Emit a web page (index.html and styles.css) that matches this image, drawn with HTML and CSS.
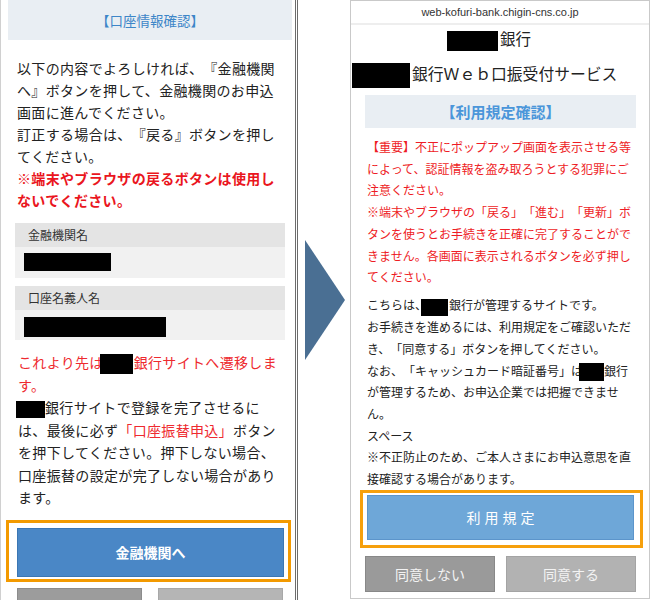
FILE: index.html
```html
<!DOCTYPE html>
<html lang="ja">
<head>
<meta charset="utf-8">
<title>口座振替</title>
<link rel="stylesheet" href="styles.css">
</head>
<body>
<div class="page">
  <section class="phone-left">
    <div class="title-l">【口座情報確認】</div>
    <p class="lead">以下の内容でよろしければ、『金融機関<br>へ』ボタンを押して、金融機関のお申込<br>画面に進んでください。<br>訂正する場合は、『戻る』ボタンを押し<br>てください。<br><strong class="warn">※端末やブラウザの戻るボタンは使用し<br>ないでください。</strong></p>
    <div class="info info-first">
      <div class="info-head">金融機関名</div>
      <div class="info-body"><span class="mask mask-bank"></span></div>
    </div>
    <div class="info info-second">
      <div class="info-head">口座名義人名</div>
      <div class="info-body info-body-tall"><span class="mask mask-holder"></span></div>
    </div>
    <p class="red-l">これより先は<span class="mask mask-inline-a"></span>銀行サイトへ遷移しま<br>す。</p>
    <p class="body-l"><span class="mask mask-inline-b"></span>銀行サイトで登録を完了させるに<br>は、最後に必ず<span class="red">「口座振替申込」</span>ボタン<br>を押下してください。押下しない場合、<br>口座振替の設定が完了しない場合があり<br>ます。</p>
    <div class="cta-l">
      <div class="btn-l">金融機関へ</div>
    </div>
    <div class="choices-l">
      <div class="gray-dark"></div>
      <div class="gray-light"></div>
    </div>
  </section>

  <div class="arrow">
    <svg width="40" height="120" viewBox="0 0 40 120"><polygon points="0,0 40,60 0,120" fill="#4a6f93"/></svg>
  </div>

  <section class="phone-right">
    <div class="url">web-kofuri-bank.chigin-cns.co.jp</div>
    <div class="bank-name"><span class="mask mask-r1"></span>銀行</div>
    <div class="service"><span class="mask mask-r2"></span>銀行Ｗｅｂ口振受付サービス</div>
    <div class="title-r">【利用規定確認】</div>
    <p class="notice">【重要】不正にポップアップ画面を表示させる等<br>によって、認証情報を盗み取ろうとする犯罪にご<br>注意ください。<br>※端末やブラウザの「戻る」「進む」「更新」ボ<br>タンを使うとお手続きを正確に完了することがで<br>きません。各画面に表示されるボタンを必ず押し<br>てください。</p>
    <p class="body-r">こちらは、<span class="mask mask-r3"></span>銀行が管理するサイトです。<br>お手続きを進めるには、利用規定をご確認いただ<br>き、「同意する」ボタンを押してください。<br>なお、「キャッシュカード暗証番号」は<span class="mask mask-r4"></span>銀行<br>が管理するため、お申込企業では把握できませ<br>ん。<br>スペース<br>※不正防止のため、ご本人さまにお申込意思を直<br>接確認する場合があります。</p>
    <div class="cta-r">
      <div class="btn-r">利用規定</div>
    </div>
    <div class="choices-r">
      <div class="choice choice-no">同意しない</div>
      <div class="choice choice-yes">同意する</div>
    </div>
  </section>
</div>
</body>
</html>
```
FILE: styles.css
```css
* { box-sizing: border-box; margin: 0; padding: 0; }
html, body { width: 650px; height: 600px; overflow: hidden; background: #fff; }
body {
  font-family: "Noto Sans CJK JP", "Noto Sans", sans-serif; color: #222;
  text-spacing-trim: space-all;
}

.page { display: flex; width: 650px; height: 600px; }

.mask { display: inline-block; background: #000; vertical-align: middle; }

/* left phone */
.phone-left {
  flex: none; width: 298px; height: 600px; overflow: hidden;
  border-left: 1px solid #d0d0d0; border-right: 3px double #6c6c6c;
}
.title-l {
  margin: 0 3px 0 7px; height: 40px; background: #e9eef3;
  color: #3d86c8; font-size: 13.5px; line-height: 40px; text-align: center;
}
.lead {
  margin-top: 17px; padding-left: 16px; font-size: 14px; letter-spacing: .33px;
  line-height: 22px; white-space: nowrap;
}
.warn { color: #ea1520; font-weight: 700; }

.info { margin: 0 10px 0 14px; }
.info-first { margin-top: 12px; }
.info-second { margin-top: 8px; }
.info-head {
  height: 24px; background: #e4e4e4; font-size: 12px; line-height: 24px;
  padding-left: 13px; color: #333;
}
.info-body { height: 31px; background: #f1f1f1; padding: 6px 0 0 9px; }
.info-body-tall { height: 30px; padding-top: 7px; }
.info-body .mask { display: block; }
.mask-bank { width: 87px; height: 18px; }
.mask-holder { width: 142px; height: 20px; }

.red-l {
  margin-top: 11px; padding-left: 17px; font-size: 14px; letter-spacing: .33px;
  line-height: 22px; color: #ee2a2f; white-space: nowrap;
}
.mask-inline-a { width: 33px; height: 20px; margin: 0 1px 0 -4px; }
.body-l {
  padding-left: 17px; font-size: 14px; letter-spacing: .33px; line-height: 22.5px;
  white-space: nowrap;
}
.mask-inline-b { width: 29px; height: 17px; margin-left: -2px; }
.red { color: #ee2a2f; }

.cta-l {
  margin: 11px 4px 0 5px; border: 3px solid #f39a00; padding: 5px 4px 2px 8px;
}
.btn-l {
  height: 49px; background: #4a87c6; border: 1px solid #3b76b3; color: #fff;
  font-weight: 700; font-size: 14px; line-height: 47px; text-align: center;
}
.choices-l { display: flex; gap: 16px; margin: 6px 12px 0 16px; }
.gray-dark, .gray-light { flex: 1; height: 36px; }
.gray-dark { background: #9c9c9c; border: 1px solid #8c8c8c; }
.gray-light { background: #b5b5b5; border: 1px solid #a8a8a8; }

/* arrow */
.arrow {
  flex: none; width: 52px; height: 600px; display: flex; align-items: center;
  padding-left: 7px;
}
.arrow svg { display: block; }

/* right phone */
.phone-right {
  flex: none; width: 300px; height: 599px; overflow: hidden;
  border: 1px solid #c9c9c9;
}
.url {
  height: 24px; border-bottom: 2px solid #eeeeee; color: #333;
  font-family: "Liberation Sans", Arial, sans-serif; font-size: 11px;
  line-height: 22px; text-align: center;
}
.bank-name {
  height: 26px; line-height: 26px; padding-left: 96px; font-size: 15.5px; white-space: nowrap;
}
.mask-r1 { width: 51px; height: 20px; margin-right: 2px; }
.service {
  margin-top: 8px; height: 30px; line-height: 30px; padding-left: 1px;
  font-size: 15.8px; white-space: nowrap;
}
.mask-r2 { width: 58px; height: 25px; margin-right: 2px; }
.title-r {
  margin: 6px 13px 0 14px; height: 33px; line-height: 33px; background: #e9eef3;
  color: #4b96da; font-weight: 700; font-size: 15px; text-align: center;
}
.notice {
  margin-top: 8px; padding-left: 16px; font-size: 12px; line-height: 21.7px;
  color: #ee1c25; white-space: nowrap;
}
.body-r {
  margin-top: 6.5px; padding-left: 16px; font-size: 12px; line-height: 21.7px;
  color: #222; white-space: nowrap;
}
.mask-r3 { width: 27px; height: 17px; margin-left: -6px; margin-right: 1px; }
.mask-r4 { width: 25px; height: 18px; margin-left: -4px; }
.cta-r {
  margin: 0 6px 0 9px; border: 3px solid #f6a00c; padding: 2px 6px 5px 4px;
}
.btn-r {
  height: 45px; background: #6ea7d8; border: 1px solid #5c95cb; color: #fff;
  font-size: 14px; letter-spacing: 4px; line-height: 43px; text-align: center;
  padding-left: 4px;
}
.choices-r { display: flex; gap: 11px; margin: 8px 13px 0 14px; }
.choice {
  flex: 1; height: 36px; line-height: 34px; text-align: center;
  font-size: 14px; color: #f3f3f3;
}
.choice-no { background: #9a9a9a; border: 1px solid #888; }
.choice-yes { background: #b2b2b2; border: 1px solid #a4a4a4; }
```
